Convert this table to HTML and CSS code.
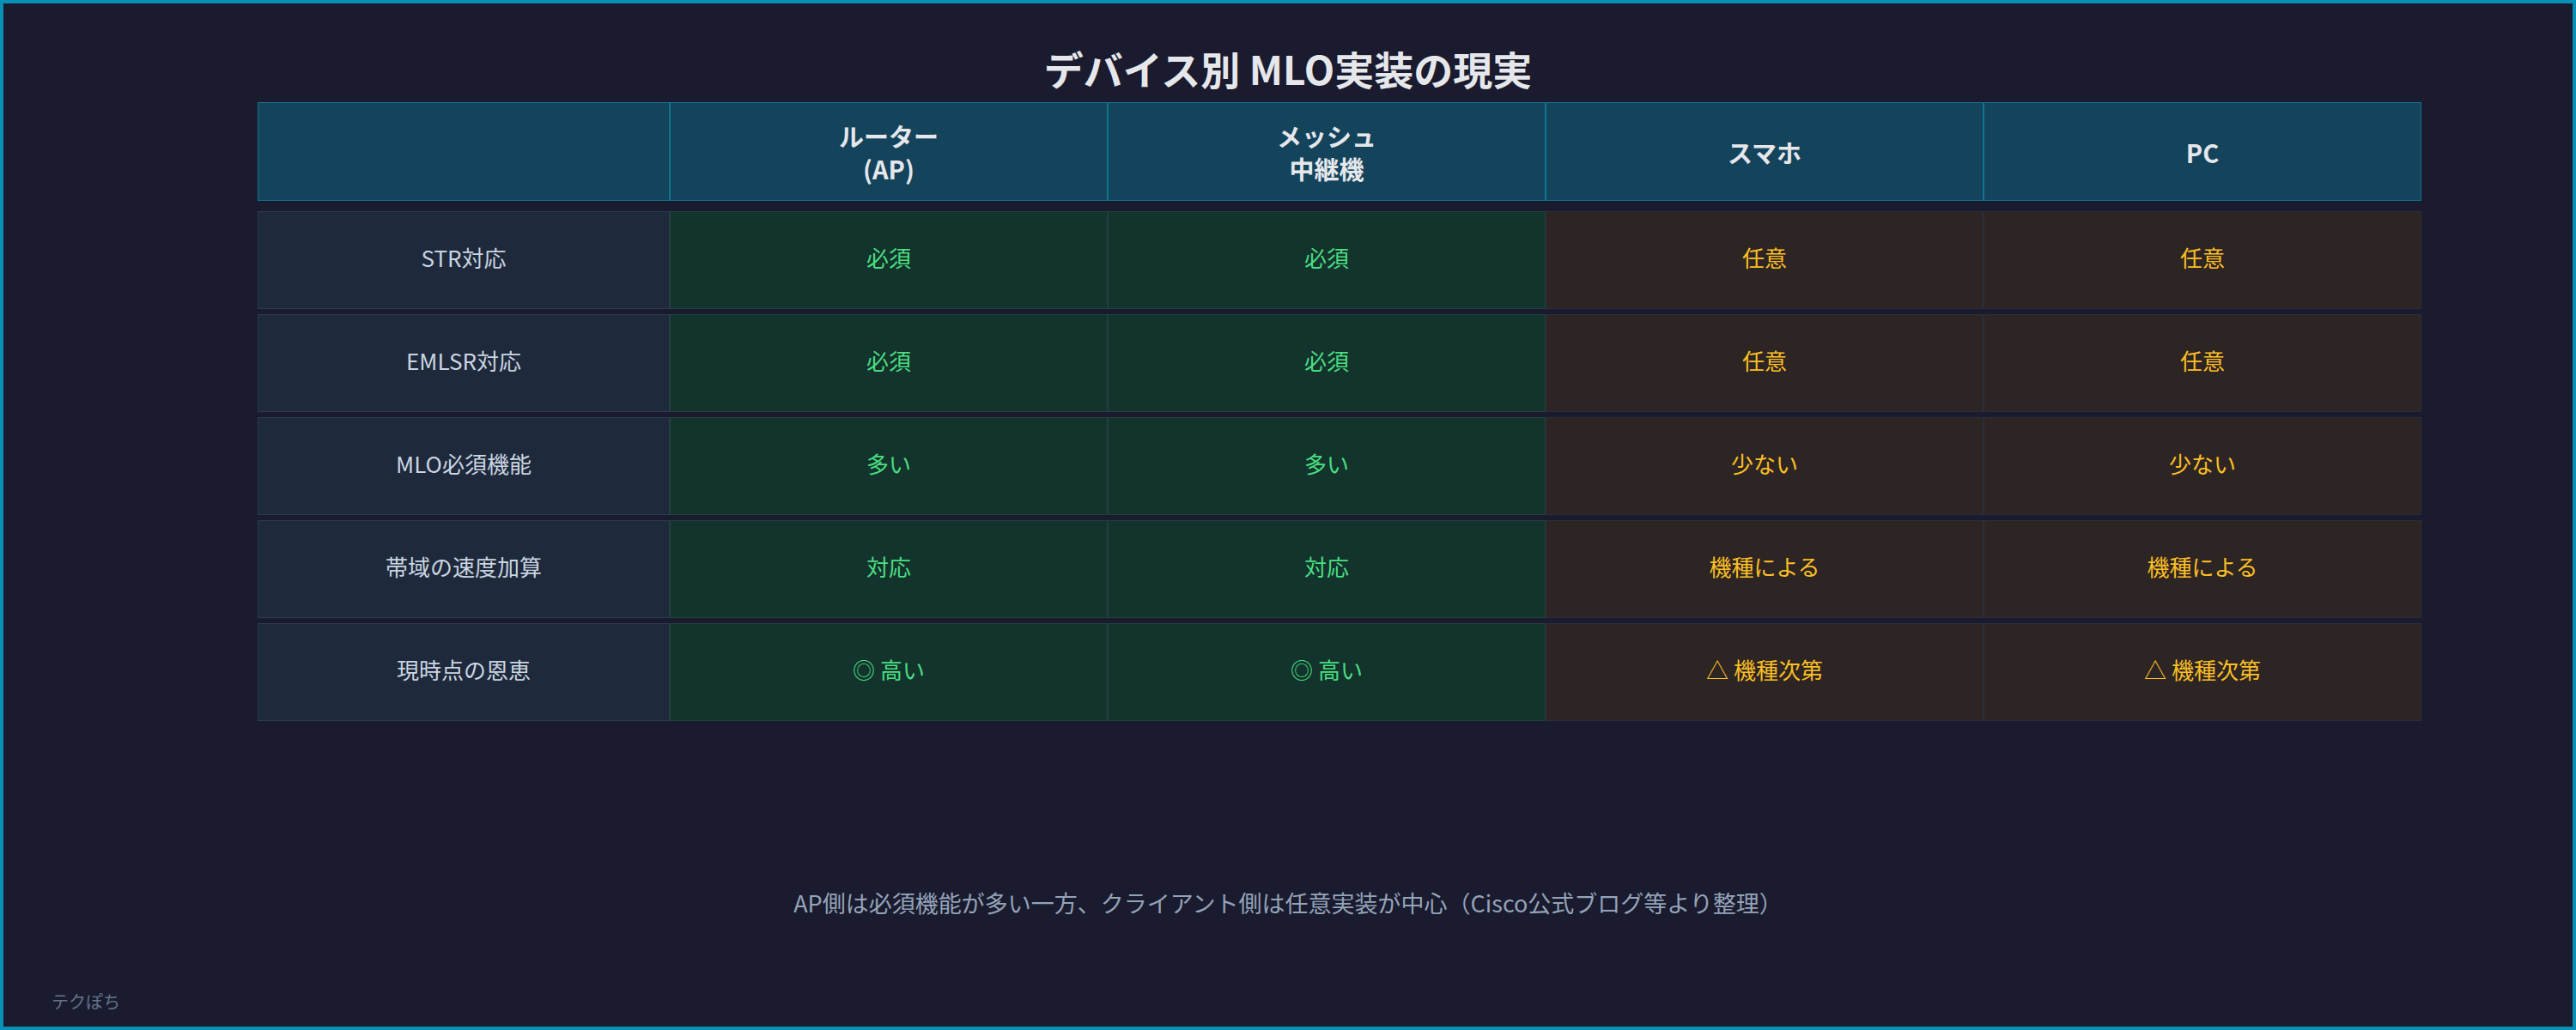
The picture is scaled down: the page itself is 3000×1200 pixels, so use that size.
FILE: index.html
```html
<!DOCTYPE html>
<html lang="ja">
<head>
<meta charset="utf-8">
<title>デバイス別 MLO実装の現実</title>
<link rel="stylesheet" href="styles.css">
</head>
<body>
<div class="page">
  <h1 class="title">デバイス別 MLO実装の現実</h1>
  <div class="table">
    <div class="row head">
      <div class="cell hcell"></div>
      <div class="cell hcell">ルーター<br>(AP)</div>
      <div class="cell hcell">メッシュ<br>中継機</div>
      <div class="cell hcell">スマホ</div>
      <div class="cell hcell">PC</div>
    </div>
    <div class="row body">
      <div class="cell label">STR対応</div>
      <div class="cell good">必須</div>
      <div class="cell good">必須</div>
      <div class="cell warn">任意</div>
      <div class="cell warn">任意</div>
    </div>
    <div class="row body">
      <div class="cell label">EMLSR対応</div>
      <div class="cell good">必須</div>
      <div class="cell good">必須</div>
      <div class="cell warn">任意</div>
      <div class="cell warn">任意</div>
    </div>
    <div class="row body">
      <div class="cell label">MLO必須機能</div>
      <div class="cell good">多い</div>
      <div class="cell good">多い</div>
      <div class="cell warn">少ない</div>
      <div class="cell warn">少ない</div>
    </div>
    <div class="row body">
      <div class="cell label">帯域の速度加算</div>
      <div class="cell good">対応</div>
      <div class="cell good">対応</div>
      <div class="cell warn">機種による</div>
      <div class="cell warn">機種による</div>
    </div>
    <div class="row body">
      <div class="cell label">現時点の恩恵</div>
      <div class="cell good">◎ 高い</div>
      <div class="cell good">◎ 高い</div>
      <div class="cell warn">△ 機種次第</div>
      <div class="cell warn">△ 機種次第</div>
    </div>
  </div>
  <p class="note">AP側は必須機能が多い一方、クライアント側は任意実装が中心（Cisco公式ブログ等より整理）</p>
  <div class="brand">テクぽち</div>
</div>
</body>
</html>
```

FILE: styles.css
```css
* { box-sizing: border-box; }
html, body {
  margin: 0;
  padding: 0;
  background: #1a1b2e;
}
body {
  font-family: "Noto Sans CJK JP", "Noto Sans", sans-serif;
}
.page {
  width: 3000px;
  height: 1200px;
  border: 4px solid #0891b2;
  background: #1a1b2e;
  padding-top: 47px;
  display: flex;
  flex-direction: column;
}
.title {
  margin: 0 0 12px 0;
  text-align: center;
  font-size: 46px;
  line-height: 56px;
  font-weight: 700;
  color: #e5e7eb;
}
.table {
  width: 2520px;
  margin-left: 296px;
  display: flex;
  flex-direction: column;
  gap: 6px;
}
.row {
  display: grid;
  grid-template-columns: 480px repeat(4, 1fr);
}
.head {
  height: 115px;
  margin-bottom: 6px;
}
.body {
  height: 114px;
}
.cell {
  display: flex;
  align-items: center;
  justify-content: center;
  text-align: center;
  font-size: 26px;
  line-height: 36px;
}
.body .cell {
  padding-bottom: 6px;
}
.hcell {
  background: #14435c;
  border: 1px solid #0e7490;
  color: #e5e7eb;
  font-weight: 700;
  font-size: 29px;
  line-height: 38px;
}
.label {
  background: #1e293b;
  border: 1px solid #2c3a4d;
  color: #cbd5e1;
}
.good {
  background: #13332d;
  border: 1px solid #22403c;
  color: #4ade80;
}
.warn {
  background: #2d2524;
  border: 1px solid #2a2e3a;
  color: #fbbf24;
}
.note {
  margin: 194px 0 0 0;
  text-align: center;
  font-size: 27px;
  line-height: 36px;
  color: #94a3b8;
}
.brand {
  margin-top: 85px;
  padding-left: 56px;
  font-size: 20px;
  line-height: 24px;
  color: #64748b;
}
```
